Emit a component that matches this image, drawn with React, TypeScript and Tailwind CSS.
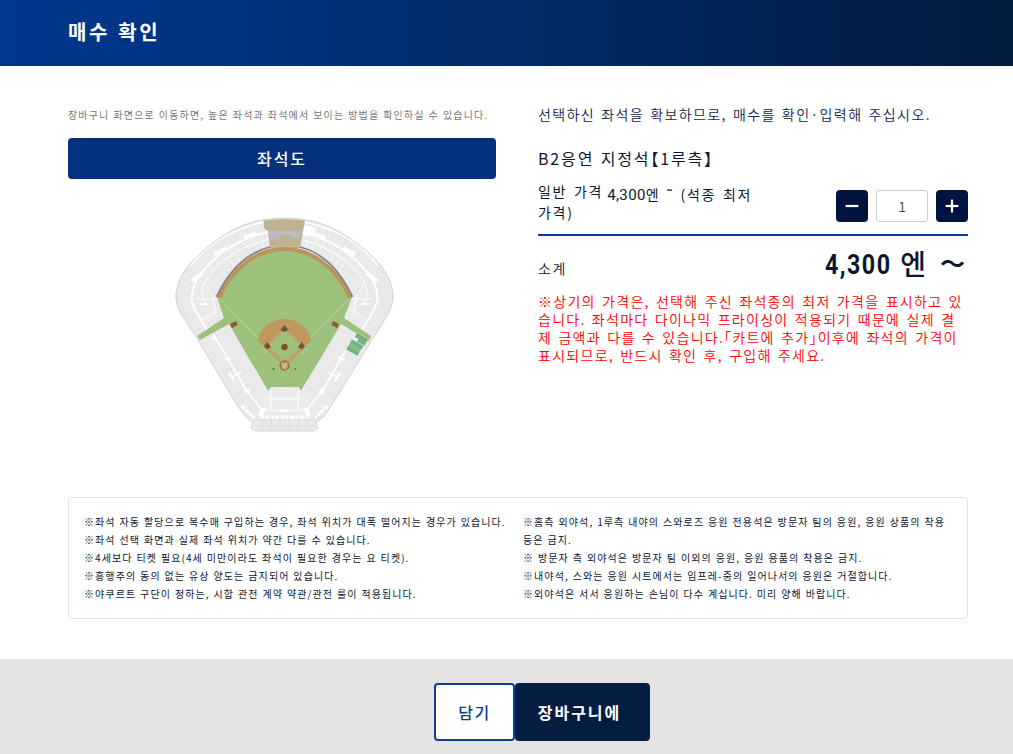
import { Minus, Plus } from 'lucide-react';

const priceNotes = [
  '※상기의 가격은, 선택해 주신 좌석종의 최저 가격을 표시하고 있',
  '습니다. 좌석마다 다이나믹 프라이싱이 적용되기 때문에 실제 결',
  '제 금액과 다를 수 있습니다.「카트에 추가」이후에 좌석의 가격이',
  '표시되므로, 반드시 확인 후, 구입해 주세요.',
];

const leftNotes = [
  '※좌석 자동 할당으로 복수매 구입하는 경우, 좌석 위치가 대폭 떨어지는 경우가 있습니다.',
  '※좌석 선택 화면과 실제 좌석 위치가 약간 다를 수 있습니다.',
  '※4세보다 티켓 필요(4세 미만이라도 좌석이 필요한 경우는 요 티켓).',
  '※흥행주의 동의 없는 유상 양도는 금지되어 있습니다.',
  '※야쿠르트 구단이 정하는, 시합 관전 계약 약관/관전 룰이 적용됩니다.',
];

const rightNotes = [
  '※홈측 외야석, 1루측 내야의 스와로즈 응원 전용석은 방문자 팀의 응원, 응원 상품의 착용',
  '등은 금지.',
  '※ 방문자 측 외야석은 방문자 팀 이외의 응원, 응원 용품의 착용은 금지.',
  '※내야석, 스와는 응원 시트에서는 임프레-중의 일어나서의 응원은 거절합니다.',
  '※외야석은 서서 응원하는 손님이 다수 계십니다. 미리 양해 바랍니다.',
];

const STAND =
  'M285 218C304 218 322 222 338 231C355 240 371 254 381 266C390 277 393 288 393 298C392 306 390 311 387 316L372 340L333 403L324 416L316 423L318 428L313 431H256L251 428L253 423L245 416L237 405L198 340L183 317C178 309 176 303 176 296C176 284 182 273 192 262C203 250 217 239 231 231C247 222 266 218 285 218Z';

const FIELD =
  'M217 297C231 267 256 247 284.500 247C313 247 338 267 352 297L344 318L371 336L369 341L341 324L301 391L299 387H271L268 391L229 324L200 340L197 336L224 318Z';

// aisles of the left half, mirrored for the right half
function StandAisles() {
  return (
    <g fill="none" stroke="#fff">
      <path d="M191 266C205 246 230 230 264 222" strokeWidth="1.600" />
      <path d="M269 232C240 238 218 253 203 271C192 284 189 298 194 308L208 332" strokeWidth="1.800" />
      <path d="M270 239C244 245 224 258 212 272C202 284 199 292 206 303" strokeWidth="1" />
      <path d="M264 227C236 234 213 250 198 267" strokeWidth="7" strokeDasharray="0.400 6" opacity="0.500" />
      <path d="M270 236C243 242 222 256 207 273" strokeWidth="7" strokeDasharray="0.500 8" opacity="0.800" />
      <path d="M270 243C245 249 228 263 213 288" strokeWidth="7" strokeDasharray="0.600 6.500" opacity="0.800" />
      <path d="M184 275L184 297L199 325" strokeWidth="12" strokeDasharray="0.400 8" opacity="0.600" />
      <path d="M205 285L213 296L215 315M196 299H218M219 308L202 321" strokeWidth="0.900" />
      <path d="M213 334L230 362L246 390L263 411" strokeWidth="1.600" />
      <path d="M206 340L253 416" strokeWidth="13" strokeDasharray="0.400 8" opacity="0.600" />
      <path d="M222 329L266 400" strokeWidth="14" strokeDasharray="0.400 7" opacity="0.600" />
      <path d="M253 365L268 391" strokeWidth="1.500" />
      <path d="M229 373L234 381M234 370L239 378M232 377L241 372" strokeWidth="1.800" />
      <path d="M242 406L254 418" strokeWidth="2.500" strokeDasharray="4 0.800" />
      <path d="M268 399H285M264 410H285M271 390V409" strokeWidth="1" />
      <g fill="#fff" stroke="none">
        <path d="M243 236L255 232L257 235L244 239ZM214 252L225 247L226 250L215 256ZM190 280L202 271L204 274L194 283Z" />
        <path d="M200 303H208V305H200ZM211 338L216 336V339L213 341ZM224 359L230 356L231 360L227 361ZM244 391L249 388L250 392L247 394ZM261 408H266L263 416H258Z" />
      </g>
    </g>
  );
}

function StadiumMap() {
  return (
    <svg viewBox="174 214 222 222" className="h-[222px] w-[222px]">
      <defs>
        <clipPath id="stand"><path d={STAND} /></clipPath>
        <pattern id="seatsL" width="9" height="3" patternUnits="userSpaceOnUse" patternTransform="rotate(-31)">
          <rect width="9" height="3" fill="#ebebeb" />
          <path d="M0 0H9" stroke="#dadada" strokeWidth="0.700" />
        </pattern>
        <pattern id="seatsR" width="9" height="3" patternUnits="userSpaceOnUse" patternTransform="rotate(31)">
          <rect width="9" height="3" fill="#ebebeb" />
          <path d="M0 0H9" stroke="#dadada" strokeWidth="0.700" />
        </pattern>
      </defs>

      {/* Stands */}
      <g clipPath="url(#stand)">
        <rect x="174" y="214" width="111" height="222" fill="url(#seatsL)" />
        <rect x="284.500" y="214" width="111" height="222" fill="url(#seatsR)" />
        <path d="M268 388H301L311 408L318 432H251L258 408Z" fill="#ebebeb" />
        <StandAisles />
        <g transform="translate(569 0) scale(-1 1)">
          <StandAisles />
        </g>
        <path d="M306 225L316 228L315 233L304 237L302 230ZM281 409H288V412H281Z" fill="#fff" />
        <path d="M260 417H309" stroke="#fff" strokeWidth="3" strokeDasharray="4 1" />
        <path d="M252 420H317M253 426H316M262 416V430M271 416V430M280 416V430M289 416V430M298 416V430M307 416V430" fill="none" stroke="#d6d6d6" strokeWidth="0.600" />
      </g>
      <path d={STAND} fill="none" stroke="#d2d2d2" />

      {/* Scoreboard area */}
      <path d="M263.500 220.500Q284.500 217.500 305 220.500L300 248H270L268 231L264 228Z" fill="#beb292" />
      <path d="M268.500 231H302L299 239H291V235H279V239H270Z" fill="#bcbcbc" />

      {/* Field */}
      <path d={FIELD} fill="#9dc17c" />
      <path d="M219 298C232 268 257 249 284.500 249C312 249 337 268 350 298" fill="none" stroke="#ba945b" strokeWidth="4" />
      <path d="M216.500 297C231 266 250 252 270 247M300 247C320 252 338 266 352.500 297" fill="none" stroke="#858585" strokeWidth="1.800" />
      <path d="M270 246.500H300" stroke="#c2b9a5" />
      <path d="M284.500 365L219 298M284.500 365L350 298" stroke="#bdd1a3" />
      <path d="M284.500 367L257.500 340C265 312 304 312 311.500 340Z" fill="#bf985f" />
      <path d="M284.500 330L300.500 346L284.500 362L268.500 346Z" fill="#9dc17c" />
      <path d="M284.500 329L267 346L284.500 364L302 346Z" fill="none" stroke="#d4b287" />
      <g fill="#79522f">
        <path d="M267.500 342L271 347L267 349.500L264 346ZM301.500 342L298 347L302 349.500L305 346ZM280.500 330L284.500 325L288.500 330L284.500 332Z" />
        <circle cx="284.500" cy="347" r="3.200" />
        <circle cx="273.500" cy="369" r="0.900" />
        <circle cx="295.500" cy="369" r="0.900" />
        <path d="M230 324L236 321L237.500 325L232 328ZM339 324L333 321L331.500 325L337 328Z" fill="#8c5930" />
      </g>
      <circle cx="284.500" cy="365.500" r="4.400" fill="#c7a16b" stroke="#94683c" strokeWidth="1.300" />
      <path d="M282 363L284.500 366L287 363M284.500 366V369" fill="none" stroke="#ead8bd" strokeWidth="0.900" />
      <path d="M261 351L264 349L267 352L265 355M308 351L305 349L302 352L304 355" fill="none" stroke="#bdd1a3" strokeWidth="0.700" />

      {/* Home side blocks */}
      <path d="M357 332.500L368.500 339L364.500 346L353 339.500ZM352 339L364 346L359.500 352L348.500 345ZM349.500 343.500L361 350L357.500 356L346 349.500Z" fill="#72b27c" stroke="#e8eee8" strokeWidth="0.400" />
      <path d="M354 337L358.500 339L357 341.500L353 340Z" fill="#f2f2f2" />
    </svg>
  );
}

export default function App() {
  return (
    <div className="h-[754px] w-[1013px] overflow-hidden bg-white font-['Noto_Sans_CJK_KR',sans-serif] text-[#0b1730]">
      <header className="flex h-[66px] items-center bg-linear-to-r from-[#00388f] via-[#002b6b] to-[#001b3d] px-[68px] pb-[3px]">
        <h1 className="text-[20px] leading-6 font-bold tracking-[2.6px] text-white [word-spacing:1px]">매수 확인</h1>
      </header>

      <main className="h-[593px] px-[68px] pt-[40px]">
        <div className="flex h-[391px] w-[900px] gap-[42px]">
          {/* Seat map */}
          <section className="w-[428px] shrink-0">
            <p className="text-[10px] leading-[18px] tracking-[1.17px] whitespace-nowrap text-[#777] [word-spacing:0.5px]">
              장바구니 화면으로 이동하면, 높은 좌석과 좌석에서 보이는 방법을 확인하실 수 있습니다.
            </p>
            <button className="mt-[14px] flex h-[41px] w-full items-center justify-center rounded-[4px] bg-[#04307e] pb-px text-[16px] font-medium tracking-[2px] text-white">
              좌석도
            </button>
            <div className="mt-[35px] flex pl-[106px]">
              <StadiumMap />
            </div>
          </section>

          {/* Quantity and subtotal */}
          <section className="w-[430px] shrink-0">
            <p className="-mt-px text-[14px] leading-[18px] font-[350] tracking-[1.4px] whitespace-nowrap text-[#10254c] [word-spacing:1.6px]">
              선택하신 좌석을 확보하므로, 매수를 확인·입력해 주십시오.
            </p>
            <h2 className="mt-[24px] text-[16px] leading-[22px] tracking-[1.85px] whitespace-nowrap [font-feature-settings:'halt'] [word-spacing:1px]">
              B2응연 지정석【1루측】
            </h2>
            <div className="mt-[13px] flex h-[54px] justify-between border-b-2 border-[#0a3d96]">
              <div className="-mt-px text-[14px] leading-[20px] tracking-[1.7px] whitespace-nowrap [word-spacing:2px]">
                <div className="flex gap-[4px]">
                  <span>일반 가격</span>
                  <span className="pt-[3px]">
                    <span className="font-['Roboto'] text-[15px] tracking-[0.4px]">4,300</span>엔 ˜ (석종 최저
                  </span>
                </div>
                <div className="-mt-[3px]">가격)</div>
              </div>
              <div className="flex gap-2 pt-[8px]">
                <button className="flex h-8 w-8 items-center justify-center rounded-[4px] bg-[#00133f] text-white">
                  <Minus size={22} strokeWidth={2.4} strokeLinecap="butt" />
                </button>
                <span className="flex h-8 w-[52px] items-center justify-center rounded-[3px] border border-[#ccc] text-[14px] font-[350] text-[#444]">
                  1
                </span>
                <button className="flex h-8 w-8 items-center justify-center rounded-[4px] bg-[#00133f] text-white">
                  <Plus size={22} strokeWidth={2.4} strokeLinecap="butt" />
                </button>
              </div>
            </div>
            <div className="flex h-[57px] justify-between">
              <span className="pt-[23px] text-[14px] leading-[18px] font-[350] tracking-[1.5px]">소계</span>
              <span className="flex items-center text-[28px] leading-[57px] font-bold">
                <span className="w-[66px] origin-left scale-x-[0.83] font-['Roboto'] tracking-[1.8px]">4,300</span>
                <span className="ml-[9px] pb-[3px] font-medium">엔</span>
                <span className="mr-[3px] ml-[14px] pb-[5px] text-[25px]">～</span>
              </span>
            </div>
            <div className="-mt-px text-[14px] leading-[18px] font-[350] tracking-[1.28px] whitespace-nowrap text-[#ff0000] [font-feature-settings:'halt'] [word-spacing:1.9px]">
              {priceNotes.map((line) => (
                <p key={line}>{line}</p>
              ))}
            </div>
          </section>
        </div>

        {/* Notes */}
        <div className="flex h-[122px] w-[900px] rounded-[4px] border border-[#e3e3e3] px-[15px] pt-[15px] text-[10px] leading-[18px] tracking-[1.08px] whitespace-nowrap [word-spacing:0.6px]">
          <div className="w-[439px] shrink-0">
            {leftNotes.map((line) => (
              <p key={line}>{line}</p>
            ))}
          </div>
          <div>
            {rightNotes.map((line) => (
              <p key={line}>{line}</p>
            ))}
          </div>
        </div>
      </main>

      <footer className="flex h-[95px] bg-[#e4e4e4] pt-[24px] pl-[434px]">
        <button className="flex h-[58px] w-[81px] items-center justify-center rounded-[4px] border-2 border-[#0a3d96] bg-white text-[16px] font-medium tracking-[1.6px] text-[#0a3d96]">
          담기
        </button>
        <button className="flex h-[58px] w-[135px] items-center justify-center rounded-[4px] bg-[#041d40] pr-[6px] text-[16px] font-bold tracking-[2px] text-white">
          장바구니에
        </button>
      </footer>
    </div>
  );
}
